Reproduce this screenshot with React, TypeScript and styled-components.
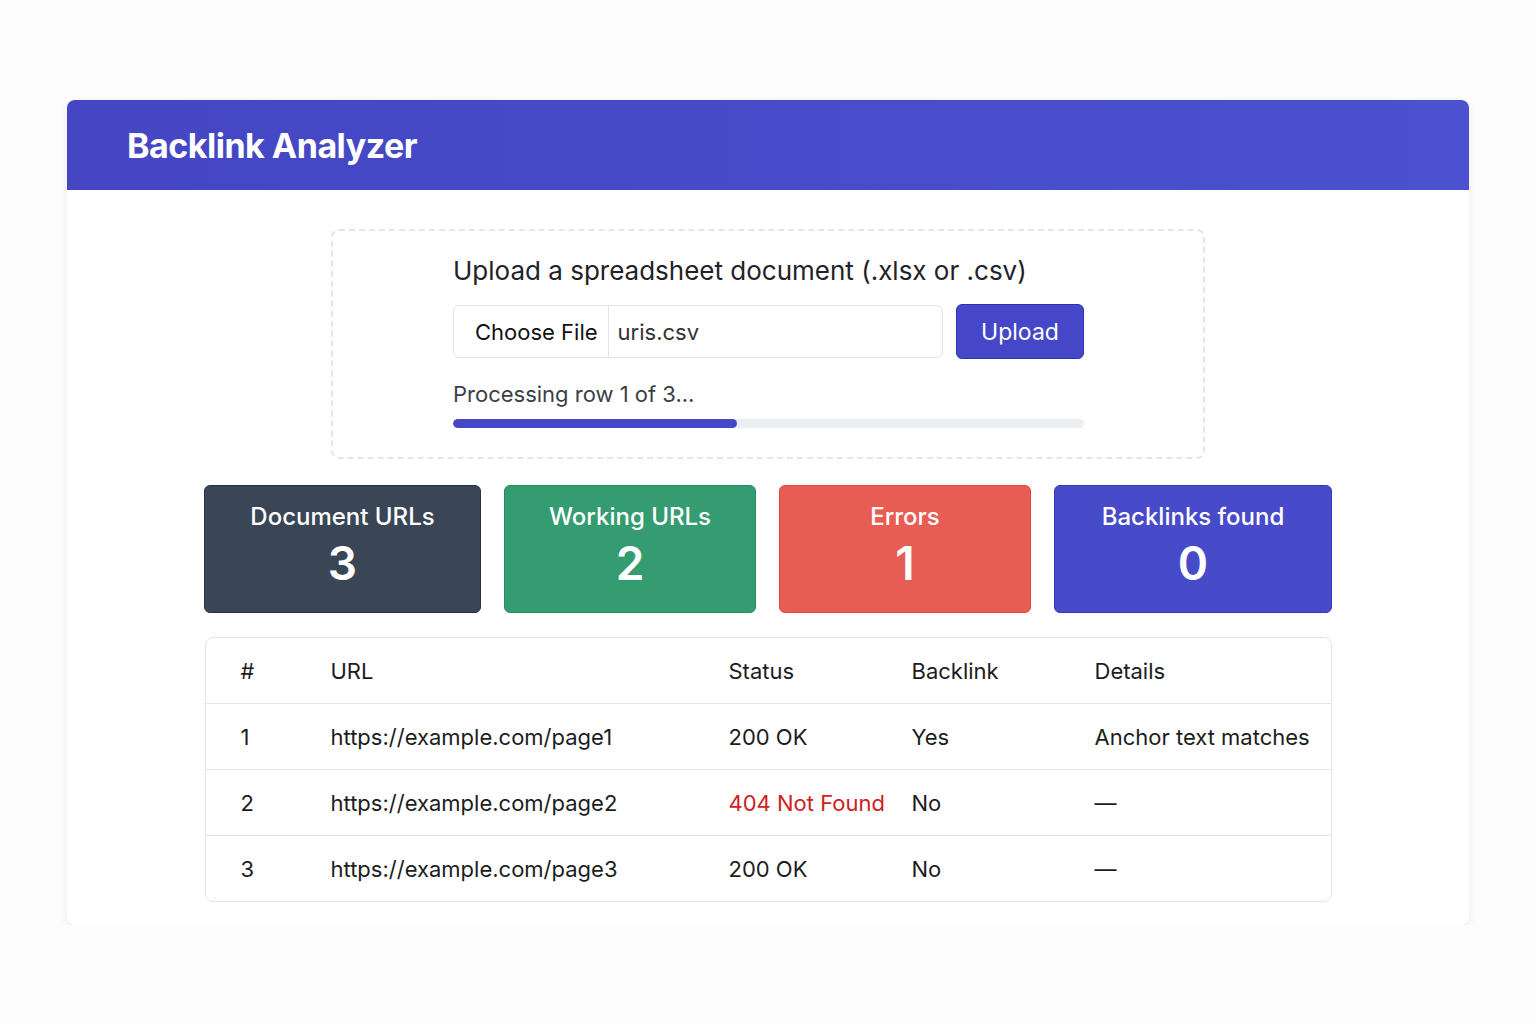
import React from 'react';
import styled, { createGlobalStyle } from 'styled-components';

const Global = createGlobalStyle`
  body { margin: 0; background: #fdfdfe; font-family: Inter, "Noto Sans", sans-serif; color: #1f2328; }
`;

const Page = styled.div`
  padding: 100px 67px 0;
`;

const Card = styled.div`
  background: #fff;
  border-radius: 8px;
  box-shadow: 0 2px 10px rgba(0, 0, 0, 0.08);
  overflow: hidden;
  padding-bottom: 23px;
`;

const Header = styled.div`
  height: 90px;
  background: linear-gradient(90deg, #4446c3, #4b51cf);
  display: flex;
  align-items: center;
  padding-left: 60px;
  color: #fff;
  font-size: 34px;
  font-weight: 700;
  letter-spacing: -0.5px;
`;

const Body = styled.div`
  display: flex;
  flex-direction: column;
  align-items: center;
  padding-top: 39px;
`;

const UploadBox = styled.div`
  width: 874px;
  height: 230px;
  box-sizing: border-box;
  border: 2px dashed #e3e5ea;
  border-radius: 8px;
  padding: 24px 0 0 120px;
`;

const Title = styled.div`
  font-size: 26px;
  margin-bottom: 18px;
`;

const Row = styled.div`
  display: flex;
  gap: 13px;
  align-items: center;
`;

const FileInput = styled.div`
  width: 490px;
  height: 53px;
  box-sizing: border-box;
  border: 1.5px solid #e2e4e8;
  border-radius: 6px;
  display: flex;
  font-size: 22px;
`;

const ChooseBtn = styled.div`
  padding: 0 10px 0 21px;
  display: flex;
  align-items: center;
  border-right: 1.5px solid #e2e4e8;
  color: #111;
`;

const FileName = styled.div`
  padding-left: 9px;
  display: flex;
  align-items: center;
  color: #333;
`;

const UploadBtn = styled.div`
  width: 128px;
  height: 55px;
  box-sizing: border-box;
  background: #4547c8;
  border: 1.5px solid #2e31b8;
  border-radius: 6px;
  color: #fff;
  font-size: 23px;
  display: flex;
  align-items: center;
  justify-content: center;
`;

const Progress = styled.div`
  margin-top: 22px;
  font-size: 22px;
  color: #3a3f47;
`;

const Track = styled.div`
  margin-top: 12px;
  width: 631px;
  height: 9px;
  border-radius: 5px;
  background: #eceef1;
  overflow: hidden;
`;

const Fill = styled.div`
  height: 100%;
  background: #4547c8;
  border-radius: 5px;
`;

const Stats = styled.div`
  margin-top: 26px;
  display: grid;
  grid-template-columns: 277px 252px 252px 278px;
  gap: 23px;
`;

const Stat = styled.div<{ $bg: string; $border: string }>`
  height: 128px;
  box-sizing: border-box;
  background: ${p => p.$bg};
  border: 1.5px solid ${p => p.$border};
  border-radius: 6px;
  color: #fff;
  display: flex;
  flex-direction: column;
  align-items: center;
  padding-top: 16px;
`;

const StatLabel = styled.div`
  font-size: 24px;
  font-weight: 500;
`;

const StatValue = styled.div`
  font-size: 46px;
  font-weight: 600;
  margin-top: 4px;
`;

const Table = styled.div`
  margin-top: 24px;
  width: 1127px;
  border: 1.5px solid #e3e5e9;
  border-radius: 8px;
  box-sizing: border-box;
`;

const TRow = styled.div<{ $last?: boolean }>`
  height: 65px;
  display: grid;
  grid-template-columns: 125px 398px 183px 183px 1fr;
  align-items: center;
  font-size: 22px;
  border-bottom: ${p => (p.$last ? 'none' : '1.5px solid #e3e5e9')};
  & > div:first-child { padding-left: 35px; }
`;

const Cell = styled.div<{ $red?: boolean }>`
  color: ${p => (p.$red ? '#d0211c' : '#1b1d21')};
  white-space: nowrap;
`;

const rows = [
  ['1', 'https://example.com/page1', '200 OK', 'Yes', 'Anchor text matches'],
  ['2', 'https://example.com/page2', '404 Not Found', 'No', '—'],
  ['3', 'https://example.com/page3', '200 OK', 'No', '—'],
];

export default function App() {
  return (
    <>
      <Global />
      <Page>
        <Card>
          <Header>Backlink Analyzer</Header>
          <Body>
            <UploadBox>
              <Title>Upload a spreadsheet document (.xlsx or .csv)</Title>
              <Row>
                <FileInput>
                  <ChooseBtn>Choose File</ChooseBtn>
                  <FileName>uris.csv</FileName>
                </FileInput>
                <UploadBtn>Upload</UploadBtn>
              </Row>
              <Progress>Processing row 1 of 3...</Progress>
              <Track>
                <Fill style={{ width: '45%' }} />
              </Track>
            </UploadBox>
            <Stats>
              <Stat $bg="#3a4556" $border="#2a3340">
                <StatLabel>Document URLs</StatLabel>
                <StatValue>3</StatValue>
              </Stat>
              <Stat $bg="#359c72" $border="#2b8a62">
                <StatLabel>Working URLs</StatLabel>
                <StatValue>2</StatValue>
              </Stat>
              <Stat $bg="#e85d53" $border="#e0463c">
                <StatLabel>Errors</StatLabel>
                <StatValue>1</StatValue>
              </Stat>
              <Stat $bg="#474bc9" $border="#3437c0">
                <StatLabel>Backlinks found</StatLabel>
                <StatValue>0</StatValue>
              </Stat>
            </Stats>
            <Table>
              <TRow>
                <Cell>#</Cell>
                <Cell>URL</Cell>
                <Cell>Status</Cell>
                <Cell>Backlink</Cell>
                <Cell>Details</Cell>
              </TRow>
              {rows.map((r, i) => (
                <TRow key={r[0]} $last={i === rows.length - 1}>
                  <Cell>{r[0]}</Cell>
                  <Cell>{r[1]}</Cell>
                  <Cell $red={r[2].startsWith('404')}>{r[2]}</Cell>
                  <Cell>{r[3]}</Cell>
                  <Cell>{r[4]}</Cell>
                </TRow>
              ))}
            </Table>
          </Body>
        </Card>
      </Page>
    </>
  );
}
